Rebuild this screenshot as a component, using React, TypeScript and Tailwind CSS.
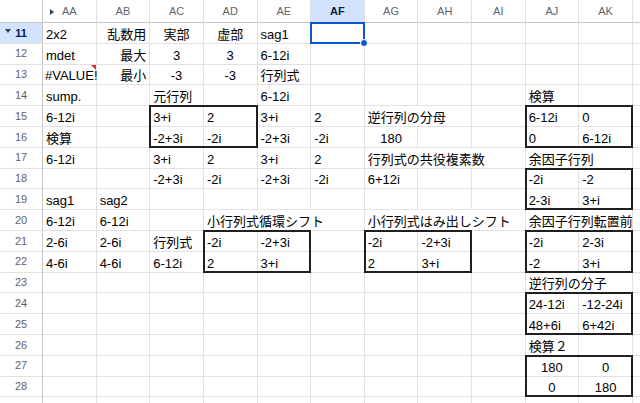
import React from 'react';

type Cell = { t: string; a?: 'l' | 'c' | 'r'; s?: number; err?: boolean };
type Raw = string | Cell;

const COLS = ['AA', 'AB', 'AC', 'AD', 'AE', 'AF', 'AG', 'AH', 'AI', 'AJ', 'AK'];

const data: Record<number, Record<string, Raw>> = {
  11: { AA: '2x2', AB: { t: '乱数用', a: 'r' }, AC: { t: '実部', a: 'c' }, AD: { t: '虚部', a: 'c' }, AE: 'sag1' },
  12: { AA: 'mdet', AB: { t: '最大', a: 'r' }, AC: { t: '3', a: 'c' }, AD: { t: '3', a: 'c' }, AE: '6-12i' },
  13: { AA: { t: '#VALUE!', err: true }, AB: { t: '最小', a: 'r' }, AC: { t: '-3', a: 'c' }, AD: { t: '-3', a: 'c' }, AE: '行列式' },
  14: { AA: 'sump.', AC: '元行列', AE: '6-12i', AJ: '検算' },
  15: { AA: '6-12i', AC: '3+i', AD: '2', AE: '3+i', AF: '2', AG: { t: '逆行列の分母', s: 2 }, AJ: '6-12i', AK: '0' },
  16: { AA: '検算', AC: '-2+3i', AD: '-2i', AE: '-2+3i', AF: '-2i', AG: { t: '180', a: 'c' }, AJ: '0', AK: '6-12i' },
  17: { AA: '6-12i', AC: '3+i', AD: '2', AE: '3+i', AF: '2', AG: { t: '行列式の共役複素数', s: 3 }, AJ: { t: '余因子行列', s: 2 } },
  18: { AC: '-2+3i', AD: '-2i', AE: '-2+3i', AF: '-2i', AG: '6+12i', AJ: '-2i', AK: '-2' },
  19: { AA: 'sag1', AB: 'sag2', AJ: '2-3i', AK: '3+i' },
  20: { AA: '6-12i', AB: '6-12i', AD: { t: '小行列式循環シフト', s: 3 }, AG: { t: '小行列式はみ出しシフト', s: 3 }, AJ: { t: '余因子行列転置前', s: 2 } },
  21: { AA: '2-6i', AB: '2-6i', AC: '行列式', AD: '-2i', AE: '-2+3i', AG: '-2i', AH: '-2+3i', AJ: '-2i', AK: '2-3i' },
  22: { AA: '4-6i', AB: '4-6i', AC: '6-12i', AD: '2', AE: '3+i', AG: '2', AH: '3+i', AJ: '-2', AK: '3+i' },
  23: { AJ: { t: '逆行列の分子', s: 2 } },
  24: { AJ: '24-12i', AK: '-12-24i' },
  25: { AJ: '48+6i', AK: '6+42i' },
  26: { AJ: '検算２' },
  27: { AJ: { t: '180', a: 'c' }, AK: { t: '0', a: 'c' } },
  28: { AJ: { t: '0', a: 'c' }, AK: { t: '180', a: 'c' } },
};

const ROWS = Array.from({ length: 19 }, (_, i) => 11 + i);

const spanClass: Record<number, string> = { 1: '', 2: 'col-span-2', 3: 'col-span-3' };
const alignClass = { l: 'justify-start', c: 'justify-center', r: 'justify-end' };

const gridCls =
  'grid grid-cols-[43px_repeat(11,53.636px)_1fr] grid-rows-[23px_repeat(19,20.8px)]';

function DataRow({ r }: { r: number }) {
  const row = data[r] || {};
  const out: React.ReactNode[] = [];
  const sel = r === 11;
  out.push(
    <div
      key="h"
      className={`relative flex items-center justify-center border-r border-b border-r-[#c4c7c5] border-b-[#e1e1e1] text-[11px] ${
        sel ? 'bg-[#d3e3fd] font-bold text-[#041e49]' : 'text-[#5f6368]'
      }`}
    >
      {sel && (
        <svg className="absolute left-[5px] top-[6px]" width="6" height="5" viewBox="0 0 6 5">
          <path d="M0 0h6L3 4z" fill="#3c4043" />
        </svg>
      )}
      {r}
    </div>
  );
  for (let i = 0; i < COLS.length; i++) {
    const raw = row[COLS[i]];
    const c: Cell | undefined = typeof raw === 'string' ? { t: raw } : raw;
    const s = c?.s ?? 1;
    out.push(
      <div
        key={COLS[i]}
        className={`flex items-end whitespace-nowrap border-r border-b border-[#e1e1e1] pb-[1px] text-[13px] leading-[15px] text-black ${
          c?.err ? 'relative pl-[2px]' : 'px-[3px]'
        } ${spanClass[s]} ${alignClass[c?.a ?? 'l']}`}
      >
        {c?.err ? <span className="relative z-10">{c.t}</span> : c?.t}
        {c?.err && (
          <svg className="absolute right-0 top-0" width="5" height="5" viewBox="0 0 5 5">
            <path d="M0 0h5v5z" fill="#d93025" />
          </svg>
        )}
      </div>
    );
    i += s - 1;
  }
  out.push(<div key="al" className="border-b border-[#e1e1e1]" />);
  return <>{out}</>;
}

function Box({ cls }: { cls: string }) {
  return <div className={`-ml-px -mt-px border-2 border-[#1f1f1f] col-span-2 row-span-2 ${cls}`} />;
}

export default function App() {
  return (
    <div
      className="relative h-[403px] w-[640px] overflow-hidden bg-white"
      style={{ fontFamily: '"Liberation Sans", Arial, "Noto Sans CJK JP", sans-serif' }}
    >
      <div className={gridCls}>
        <div className="border-r border-b border-[#c4c7c5]" />
        {COLS.map((c) => (
          <div
            key={c}
            className={`relative flex items-center justify-center border-r border-b border-r-[#e1e1e1] border-b-[#c4c7c5] text-[11px] ${
              c === 'AF' ? 'bg-[#d3e3fd] font-bold text-[#041e49]' : 'text-[#5f6368]'
            }`}
          >
            {c === 'AA' && (
              <svg className="absolute left-[7px] top-[9px]" width="4" height="6" viewBox="0 0 4 6">
                <path d="M0 0l4 3-4 3z" fill="#3c4043" />
              </svg>
            )}
            {c}
          </div>
        ))}
        <div className="border-b border-[#c4c7c5]" />
        {ROWS.map((r) => (
          <DataRow key={r} r={r} />
        ))}
      </div>

      {/* borders and selection drawn over the grid */}
      <div className={`pointer-events-none absolute inset-0 ${gridCls}`}>
        <Box cls="col-start-4 row-start-6" />
        <Box cls="col-start-11 row-start-6" />
        <Box cls="col-start-11 row-start-9" />
        <Box cls="col-start-5 row-start-12" />
        <Box cls="col-start-8 row-start-12" />
        <Box cls="col-start-11 row-start-12" />
        <Box cls="col-start-11 row-start-15" />
        <Box cls="col-start-11 row-start-18" />
        <div className="relative col-start-7 row-start-2 -ml-px -mt-px border-2 border-[#0b57d0]">
          <div className="absolute -right-[5px] -bottom-[5px] h-[8px] w-[8px] rounded-full border border-white bg-[#0b57d0]" />
        </div>
      </div>
    </div>
  );
}
